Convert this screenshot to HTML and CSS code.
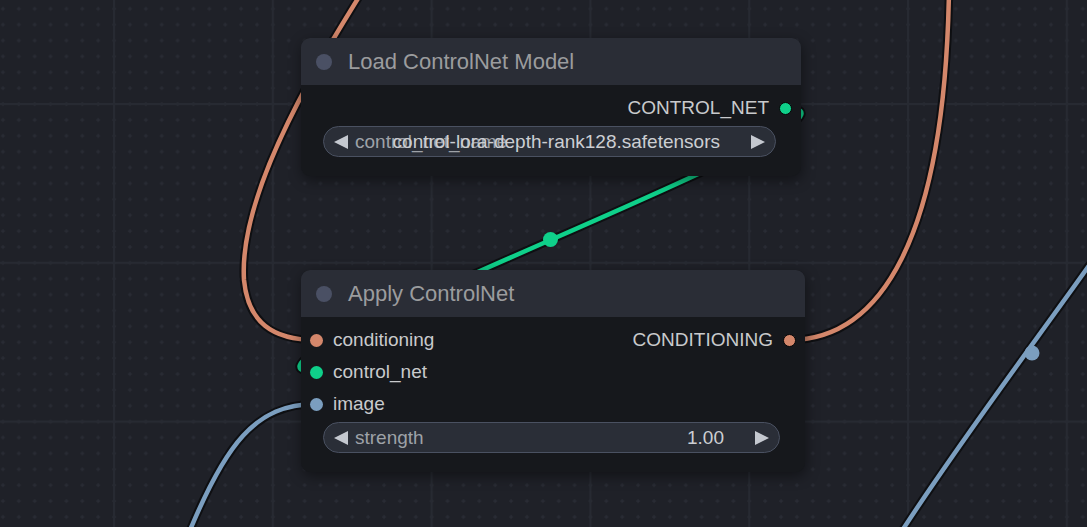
FILE: index.html
```html
<!DOCTYPE html>
<html lang="en">
<head>
<meta charset="utf-8">
<title>ControlNet nodes</title>
<link rel="stylesheet" href="styles.css">
</head>
<body>
<div class="canvas">
  <svg class="layer" width="1087" height="527" viewBox="0 0 1087 527">
    <defs>
      <pattern id="dots" patternUnits="userSpaceOnUse" x="106.06" y="96.06" width="15.88" height="15.88">
        <rect x="6" y="7.5" width="4" height="1" fill="#2b2e37"/>
        <rect x="7.5" y="6" width="1" height="4" fill="#2b2e37"/>
      </pattern>
      <pattern id="grid" patternUnits="userSpaceOnUse" x="113" y="103" width="158.8" height="158.8">
        <rect x="0" y="0" width="2" height="158.8" fill="#272a32"/>
        <rect x="0" y="0" width="158.8" height="2" fill="#272a32"/>
      </pattern>
    </defs>
    <rect width="1087" height="527" fill="#1f2128"/>
    <rect width="1087" height="527" fill="url(#dots)"/>
    <rect width="1087" height="527" fill="url(#grid)"/>

    <g class="halo">
      <path d="M 382 -40 C 332 40, 238 185, 244 280 C 248 322, 272 340, 316 340"/>
      <path d="M 789 340 C 880 340, 945 240, 949 -10"/>
      <path d="M 785 108 C 919.5 108, 181.5 372, 316 372"/>
      <path d="M 316 404 C 255 404, 225 445, 188 535"/>
      <path d="M 1100 250 C 1050 322, 960 440, 898 537"/>
    </g>
    <g class="wire">
      <path class="w-orange" d="M 382 -40 C 332 40, 238 185, 244 280 C 248 322, 272 340, 316 340"/>
      <path class="w-orange" d="M 789 340 C 880 340, 945 240, 949 -10"/>
      <path class="w-green" d="M 785 108 C 919.5 108, 181.5 372, 316 372"/>
      <path class="w-blue" d="M 316 404 C 255 404, 225 445, 188 535"/>
      <path class="w-blue" d="M 1100 250 C 1050 322, 960 440, 898 537"/>
    </g>
    <circle cx="550.5" cy="239.5" r="7.5" fill="#0fd08a"/>
    <circle cx="1032" cy="353" r="7.5" fill="#7b9ebf"/>
  </svg>

  <div class="node node-load">
    <div class="node-header">
      <span class="node-dot"></span>
      <span class="node-title">Load ControlNet Model</span>
    </div>
    <div class="node-body">
      <div class="slot-row">
        <div class="slot-in"></div>
        <div class="slot-out"><span class="slot-label">CONTROL_NET</span><span class="dot dot-out c-green"></span></div>
      </div>
      <div class="widget">
        <svg class="arrow" width="16" height="16" viewBox="0 0 16 16"><polygon points="15,1 15,15 1,8"/></svg>
        <div class="widget-text">
          <span class="wlabel">control_net_name</span>
          <span class="wvalue">control-lora-depth-rank128.safetensors</span>
        </div>
        <svg class="arrow" width="16" height="16" viewBox="0 0 16 16"><polygon points="1,1 1,15 15,8"/></svg>
      </div>
    </div>
  </div>

  <div class="node node-apply">
    <div class="node-header">
      <span class="node-dot"></span>
      <span class="node-title">Apply ControlNet</span>
    </div>
    <div class="node-body">
      <div class="slot-row">
        <div class="slot-in"><span class="dot c-orange"></span><span class="slot-label">conditioning</span></div>
        <div class="slot-out"><span class="slot-label">CONDITIONING</span><span class="dot dot-out c-orange"></span></div>
      </div>
      <div class="slot-row">
        <div class="slot-in"><span class="dot c-green"></span><span class="slot-label">control_net</span></div>
      </div>
      <div class="slot-row">
        <div class="slot-in"><span class="dot c-blue"></span><span class="slot-label">image</span></div>
      </div>
      <div class="widget">
        <svg class="arrow" width="16" height="16" viewBox="0 0 16 16"><polygon points="15,1 15,15 1,8"/></svg>
        <div class="widget-text">
          <span class="wlabel">strength</span>
          <span class="wvalue">1.00</span>
        </div>
        <svg class="arrow" width="16" height="16" viewBox="0 0 16 16"><polygon points="1,1 1,15 15,8"/></svg>
      </div>
    </div>
  </div>
</div>
</body>
</html>
```

FILE: styles.css
```css
html, body {
  margin: 0;
  padding: 0;
  background: #1f2128;
}

.canvas {
  position: relative;
  width: 1087px;
  height: 527px;
  overflow: hidden;
  font-family: "Liberation Sans", Arial, sans-serif;
}

.layer {
  position: absolute;
  left: 0;
  top: 0;
  display: block;
}

.halo path {
  fill: none;
  stroke: #0e0f12;
  stroke-width: 8.5;
}

.wire path {
  fill: none;
  stroke-width: 4.5;
}

.w-orange { stroke: #d4876b; }
.w-green { stroke: #0fd08a; }
.w-blue { stroke: #7b9ebf; }

.node {
  position: absolute;
  left: 301px;
  background: #16181c;
  border-radius: 9px;
  overflow: hidden;
  box-shadow: 1px 4px 14px rgba(0, 0, 0, 0.45);
  display: flex;
  flex-direction: column;
}

.node-load {
  top: 38px;
  width: 500px;
}

.node-apply {
  top: 270px;
  width: 504px;
}

.node-header {
  height: 47px;
  background: #2a2d36;
  display: flex;
  align-items: center;
  padding-left: 15px;
  gap: 16px;
}

.node-dot {
  width: 16px;
  height: 16px;
  border-radius: 50%;
  background: #4a5064;
  flex: none;
}

.node-title {
  font-size: 22px;
  color: #9b9c9e;
  white-space: nowrap;
}

.node-body {
  display: flex;
  flex-direction: column;
  padding: 7px 0 19px;
}

.slot-row {
  height: 32px;
  display: flex;
  align-items: center;
  justify-content: space-between;
}

.slot-in {
  display: flex;
  align-items: center;
  gap: 10px;
  padding-left: 9px;
}

.slot-out {
  display: flex;
  align-items: center;
  gap: 10px;
  padding-right: 9px;
  margin-left: auto;
}

.slot-label {
  font-size: 19px;
  color: #c9cacc;
  white-space: nowrap;
}

.dot {
  width: 13px;
  height: 13px;
  border-radius: 50%;
  flex: none;
  box-sizing: border-box;
}

.dot-out {
  border: 1.5px solid #050506;
}

.c-orange { background: #d4876b; }
.c-green { background: #0fd08a; }
.c-blue { background: #7b9ebf; }

.widget {
  margin: 2px 25px 0 22px;
  height: 31px;
  box-sizing: border-box;
  border: 1px solid #4a5161;
  border-radius: 16px;
  background: #2a2e37;
  display: flex;
  align-items: center;
  padding: 0 9px;
}

.arrow {
  flex: none;
  display: block;
}

.arrow polygon {
  fill: #c4c8cf;
}

.widget-text {
  flex: 1;
  display: grid;
  margin: 0 30px 0 6px;
  font-size: 19px;
  white-space: nowrap;
}

.wlabel,
.wvalue {
  grid-area: 1 / 1;
}

.wlabel {
  justify-self: start;
  color: #9ea2a8;
}

.wvalue {
  justify-self: end;
  color: #ccced3;
}
```
